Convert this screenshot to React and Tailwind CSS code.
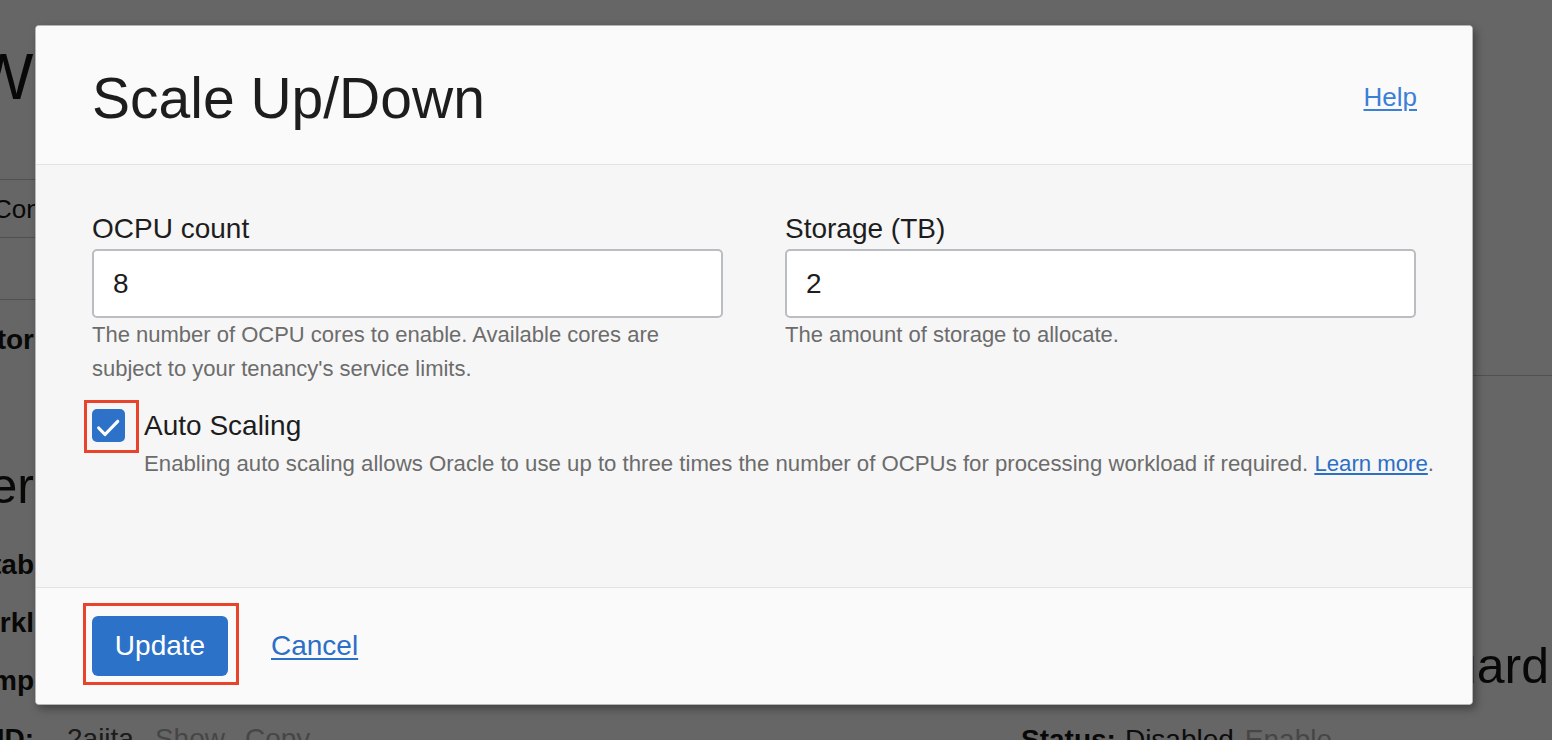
import React from "react";

function BgRowLabel({ children }) {
  return (
    <div className="w-[34px] flex justify-end whitespace-nowrap">
      <span className="font-bold text-[28px] leading-[34px]">{children}</span>
    </div>
  );
}

export default function App() {
  return (
    <div className="relative w-[1552px] h-[740px] overflow-hidden bg-white font-['Liberation_Sans',Arial,sans-serif] text-[#161513]">
      {/* background page */}
      <div className="flex">
        <div className="w-[980px] shrink-0">
          <div className="pt-[45px] ml-[-27px] text-[64px] leading-[64px] whitespace-nowrap">WorkloadDB</div>
          <div className="mt-[70px] h-[59px] border-t border-b border-[#c8c8c8] flex items-center">
            <span className="ml-[-7px] text-[26px] leading-[30px] whitespace-nowrap">Configuration</span>
          </div>
          <div className="h-[62px] border-b border-[#c8c8c8]" />
          <div className="mt-[23px] h-[34px] flex">
            <BgRowLabel>Monitor</BgRowLabel>
          </div>
          <div className="mt-[104px] h-[50px] w-[34px] flex justify-end whitespace-nowrap">
            <span className="text-[50px] leading-[50px]">Gener</span>
          </div>
          <div className="mt-[37px] h-[58px] flex items-start">
            <BgRowLabel>Datab</BgRowLabel>
          </div>
          <div className="h-[58px] flex items-start">
            <BgRowLabel>Workl</BgRowLabel>
          </div>
          <div className="h-[58px] flex items-start">
            <BgRowLabel>Comp</BgRowLabel>
          </div>
          <div className="h-[58px] flex items-start text-[28px] leading-[34px] whitespace-nowrap">
            <BgRowLabel>OCID:</BgRowLabel>
            <span className="ml-[33px] text-[#444]">2ajjta</span>
            <span className="ml-[21px] text-[#b0b0b0]">Show</span>
            <span className="ml-[20px] text-[#b0b0b0]">Copy</span>
          </div>
        </div>
        <div className="flex-1 min-w-0">
          <div className="mt-[375px] border-t border-[#c8c8c8]" />
          <div className="mt-[265px] h-[50px] flex justify-end pr-[3px] whitespace-nowrap">
            <span className="text-[50px] leading-[50px]">Autonomous Data Guard</span>
          </div>
          <div className="mt-[32px] pl-[41px] text-[28px] leading-[34px] whitespace-nowrap">
            <span className="font-bold">Status:</span>
            <span className="ml-[9px] text-[#222]">Disabled</span>
            <span className="ml-[11px] text-[#b0b0b0]">Enable</span>
          </div>
        </div>
      </div>

      {/* overlay */}
      <div className="absolute inset-0 bg-black/60" />

      {/* modal */}
      <div className="absolute left-[35px] top-[25px] w-[1438px] h-[680px] rounded-[4px] border border-[#b3b5b8] bg-[#f6f6f6] shadow-[3px_4px_8px_rgba(0,0,0,0.35)] overflow-hidden flex flex-col">
        <div className="h-[139px] shrink-0 bg-[#fafafa] border-b border-[#e3e3e3] flex justify-between items-start pl-[56px] pr-[55px] pt-[44px]">
          <h2 className="text-[57px] leading-[56px] text-[#1d1d1d] whitespace-nowrap">Scale Up/Down</h2>
          <a className="mt-[12px] text-[26px] leading-[30px] text-[#3b7fd6] underline underline-offset-[3px]">Help</a>
        </div>

        <div className="h-[423px] shrink-0 border-b border-[#e3e3e3] px-[56px] pt-[47px]">
          <div className="grid grid-cols-2 gap-x-[62px]">
            <div>
              <div className="text-[28px] leading-[34px] mb-[3px] text-[#1d1d1d]">OCPU count</div>
              <div className="h-[69px] border-2 border-[#babdc1] rounded-[5px] bg-white px-[19px] flex items-center text-[28px] text-[#1d1d1d]">8</div>
              <div className="text-[22px] leading-[34px] text-[#6c6c6c]">
                The number of OCPU cores to enable. Available cores are
                <br />
                subject to your tenancy's service limits.
              </div>
            </div>
            <div>
              <div className="text-[28px] leading-[34px] mb-[3px] text-[#1d1d1d]">Storage (TB)</div>
              <div className="h-[69px] border-2 border-[#babdc1] rounded-[5px] bg-white px-[19px] flex items-center text-[28px] text-[#1d1d1d]">2</div>
              <div className="text-[22px] leading-[34px] text-[#6c6c6c]">The amount of storage to allocate.</div>
            </div>
          </div>

          <div className="mt-[22px] flex gap-[19px]">
            <div className="relative mt-[1px] w-[33px] h-[33px] shrink-0">
              <svg width="33" height="33" viewBox="0 0 33 33" className="block">
                <rect x="0" y="0" width="33" height="33" rx="5" fill="#2d72c8" />
                <polyline points="6.7,19 13,25.5 25.7,12.3" fill="none" stroke="white" strokeWidth="3.2" strokeLinecap="round" strokeLinejoin="round" />
              </svg>
              <span className="absolute left-[-8px] top-[-9px] w-[55px] h-[53px] border-[3px] border-[#e8442b]" />
            </div>
            <div className="mt-[1px]">
              <div className="text-[28px] leading-[34px] text-[#1d1d1d]">Auto Scaling</div>
              <div className="mt-[4px] text-[22.2px] leading-[34px] text-[#6c6c6c] whitespace-nowrap">
                Enabling auto scaling allows Oracle to use up to three times the number of OCPUs for processing workload if required.{" "}
                <a className="text-[#2c6fc7] underline underline-offset-[2px]">Learn more</a>.
              </div>
            </div>
          </div>
        </div>

        <div className="flex-1 bg-[#fafafa] flex items-center px-[56px]">
          <div className="relative">
            <button className="w-[136px] h-[60px] bg-[#2c72c8] rounded-[6px] text-white text-[28px] leading-[34px]">Update</button>
            <span className="absolute left-[-9px] top-[-13px] w-[156px] h-[82px] border-[3px] border-[#e8442b]" />
          </div>
          <a className="ml-[43px] text-[28px] leading-[34px] text-[#2c6fc7] underline underline-offset-[3px]">Cancel</a>
        </div>
      </div>
    </div>
  );
}
